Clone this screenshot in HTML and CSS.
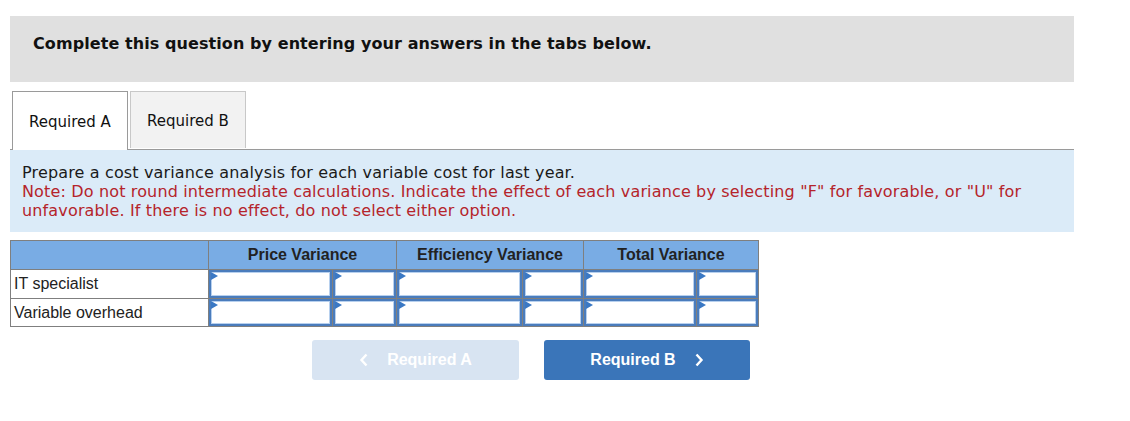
FILE: index.html
```html
<!DOCTYPE html>
<html>
<head>
<meta charset="utf-8">
<link rel="stylesheet" href="styles.css">
</head>
<body>
<div class="page">
  <div class="banner">Complete this question by entering your answers in the tabs below.</div>
  <div class="tabs">
    <div class="tab active">Required A</div>
    <div class="tab">Required B</div>
  </div>
  <div class="prompt">
    <div class="prompt-main">Prepare a cost variance analysis for each variable cost for last year.</div>
    <div class="prompt-note">Note: Do not round intermediate calculations. Indicate the effect of each variance by selecting "F" for favorable, or "U" for unfavorable. If there is no effect, do not select either option.</div>
  </div>
  <table class="grid">
    <colgroup>
      <col class="c-label">
      <col class="c-pv"><col class="c-pf">
      <col class="c-ev"><col class="c-ef">
      <col class="c-tv"><col class="c-tf">
    </colgroup>
    <thead>
      <tr>
        <th></th>
        <th colspan="2">Price Variance</th>
        <th colspan="2">Efficiency Variance</th>
        <th colspan="2">Total Variance</th>
      </tr>
    </thead>
    <tbody>
      <tr>
        <td class="label">IT specialist</td>
        <td class="in"><div class="box"></div></td>
        <td class="in"><div class="box"></div></td>
        <td class="in"><div class="box"></div></td>
        <td class="in"><div class="box"></div></td>
        <td class="in"><div class="box"></div></td>
        <td class="in"><div class="box"></div></td>
      </tr>
      <tr class="last">
        <td class="label">Variable overhead</td>
        <td class="in"><div class="box"></div></td>
        <td class="in"><div class="box"></div></td>
        <td class="in"><div class="box"></div></td>
        <td class="in"><div class="box"></div></td>
        <td class="in"><div class="box"></div></td>
        <td class="in"><div class="box"></div></td>
      </tr>
    </tbody>
  </table>
  <div class="nav">
    <div class="btn btn-prev">
      <svg class="chev" width="10" height="14" viewBox="0 0 10 14"><path d="M7.5 1.5 L2.5 7 L7.5 12.5" fill="none" stroke="currentColor" stroke-width="2.4"/></svg>
      <span>Required A</span>
    </div>
    <div class="btn btn-next">
      <span>Required B</span>
      <svg class="chev" width="10" height="14" viewBox="0 0 10 14"><path d="M2.5 1.5 L7.5 7 L2.5 12.5" fill="none" stroke="currentColor" stroke-width="2.4"/></svg>
    </div>
  </div>
</div>
</body>
</html>
```
FILE: styles.css
```css
html, body {
  margin: 0;
  padding: 0;
  background: #ffffff;
}
.page {
  padding: 16px 0 0 10px;
  width: 1064px;
  font-family: "DejaVu Sans", Verdana, sans-serif;
  color: #1a1a1a;
}
.banner {
  background: #e0e0e0;
  height: 66px;
  box-sizing: border-box;
  padding: 18px 0 0 23px;
  font-weight: bold;
  font-size: 16px;
  letter-spacing: 0.08px;
  line-height: 20px;
  color: #111;
}
.tabs {
  display: flex;
  margin-top: 9px;
  padding-left: 2px;
  gap: 2px;
  border-bottom: 1px solid #9a9a9a;
  height: 58px;
}
.tab {
  width: 116px;
  height: 57px;
  box-sizing: border-box;
  padding-top: 2px;
  border: 1px solid #c8c8c8;
  border-bottom: none;
  background: #f2f2f2;
  display: flex;
  align-items: center;
  justify-content: center;
  font-size: 15px;
  color: #111;
}
.tab.active {
  background: #ffffff;
  border-color: #9a9a9a;
  height: 59px;
  margin-bottom: -1px;
  position: relative;
}
.prompt {
  background: #dbebf8;
  padding: 13px 12px 12px 12px;
  font-size: 16px;
  letter-spacing: 0.15px;
  line-height: 19px;
}
.prompt-main {
  color: #1a1a1a;
}
.prompt-note {
  color: #b5242b;
}
.grid {
  margin-top: 8px;
  border-collapse: collapse;
  font-family: "Liberation Sans", Arial, sans-serif;
  font-size: 16px;
}
.grid col.c-label { width: 198px; }
.grid col.c-pv { width: 124px; }
.grid col.c-pf { width: 64px; }
.grid col.c-ev { width: 126px; }
.grid col.c-ef { width: 61px; }
.grid col.c-tv { width: 113px; }
.grid col.c-tf { width: 62px; }
.grid th {
  background: #79ace4;
  border: 1px solid #7f7f7f;
  height: 28px;
  padding: 0;
  font-weight: bold;
  color: #222;
  text-align: center;
}
.grid td {
  border: 1px solid #7f7f7f;
  height: 28px;
  padding: 0;
}
.grid tr.last td {
  height: 27px;
}
.grid td.label {
  padding-left: 3px;
  color: #222;
}
.grid td.in {
  position: relative;
}
.box {
  position: absolute;
  inset: 0;
  border: 2px solid #4a7cbc;
  box-shadow: inset 1px 1px 0 #b7d0ee, inset -1px -1px 0 #b7d0ee;
  background: #ffffff;
}
.box::before {
  content: "";
  position: absolute;
  left: 0;
  top: 0;
  border-left: 7px solid #3a78c4;
  border-top: 4px solid transparent;
  border-bottom: 4px solid transparent;
}
.nav {
  display: flex;
  gap: 25px;
  margin-top: 13px;
  padding-left: 302px;
}
.btn {
  height: 40px;
  border-radius: 3px;
  display: flex;
  align-items: center;
  justify-content: center;
  gap: 18px;
  font-family: "Liberation Sans", Arial, sans-serif;
  font-weight: bold;
  font-size: 16px;
  color: #ffffff;
}
.btn-prev {
  width: 207px;
  background: #d8e4f2;
}
.btn-next {
  width: 206px;
  background: #3a75b9;
}
.chev {
  display: block;
}
```
